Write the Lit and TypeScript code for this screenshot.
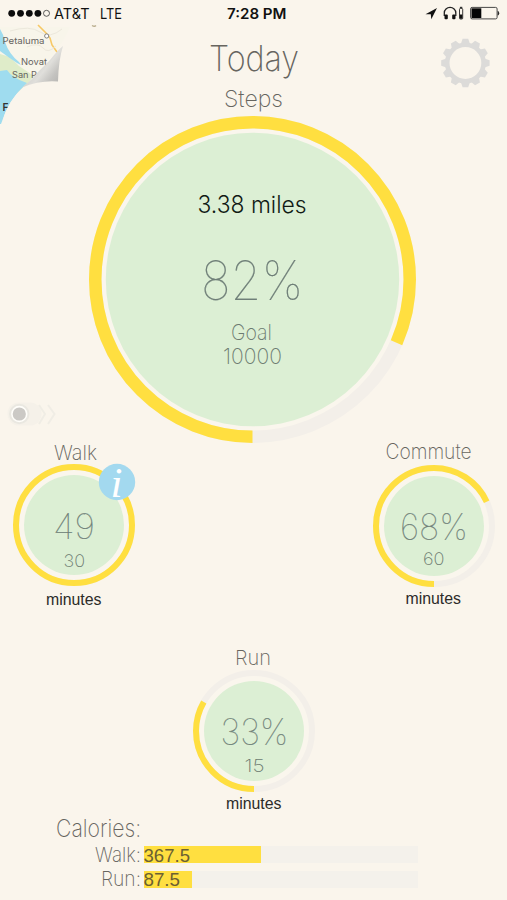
import { LitElement, html, svg, css } from "lit";
import { customElement, property } from "lit/decorators.js";

/** One run of text: its left edge, baseline, size and drawn width. */
type Run = { t: string; x: number; y: number; s: number; w: number; c: string };

const run = (r: Run) => svg`<text class=${r.c} x=${r.x} y=${r.y} font-size=${r.s}
  textLength=${r.w} lengthAdjust="spacingAndGlyphs">${r.t}</text>`;

const textStyles = css`
  svg { display: block; overflow: visible; }
  text { font-family: Inter, "Liberation Sans", sans-serif; white-space: pre; }
  .thin { font-weight: 100; fill: #6f7f78; stroke: #6f7f78; stroke-width: 0.2; }
  .light { font-weight: 200; fill: #67655f; }
  .goal { font-weight: 200; fill: #6c7b71; }
  .body { font-weight: 300; fill: #111b14; }
  .unit { font-family: "Liberation Sans", sans-serif; fill: #2c2b29; }
`;

@customElement("goal-dial")
export class GoalDial extends LitElement {
  @property({ type: Number }) size = 122;
  @property({ type: Number }) band = 6;
  @property({ type: Number }) disc = 50;
  @property({ type: Number }) progress = 0;
  @property({ attribute: false }) runs: Run[] = [];

  static styles = [
    textStyles,
    css`
      :host { display: block; }
      .track { fill: #faf6ed; stroke: #f3efe9; }
      .value { fill: none; stroke: #ffdf40; }
      .disc { fill: #dcefd4; }
    `,
  ];

  render() {
    const c = this.size / 2;
    const r = c - this.band / 2;
    const len = 2 * Math.PI * r;
    return html`<svg width=${this.size} height=${this.size} viewBox="0 0 ${this.size} ${this.size}">
      <circle class="track" cx=${c} cy=${c} r=${r} stroke-width=${this.band}></circle>
      <circle class="value" cx=${c} cy=${c} r=${r} stroke-width=${this.band}
        stroke-dasharray="${len * this.progress} ${len}" transform="rotate(90 ${c} ${c})"></circle>
      <circle class="disc" cx=${c} cy=${c} r=${this.disc}></circle>
      ${this.runs.map(run)}
    </svg>`;
  }
}

const toothAngles = Array.from({ length: 12 }, (_, i) => i * 30);

@customElement("app-root")
export class AppRoot extends LitElement {
  static styles = [
    textStyles,
    css`
      :host {
        display: flex; flex-direction: column; position: relative;
        width: 507px; height: 900px; overflow: hidden; background: #faf5ec;
      }
      .status { display: grid; grid-template-columns: 220px 200px 87px; height: 27px; flex: none; }
      .status text { fill: #111; }
      .status .clock { font-weight: 600; }
      .head { display: grid; grid-template-columns: 200px 227px 80px; height: 89px; flex: none; }
      .title { grid-column: 2; }
      .main { display: flex; justify-content: center; padding-right: 2px; height: 327px; flex: none; }
      .pair { display: flex; justify-content: space-between; height: 180px; padding: 0 12px 0 13px; flex: none; }
      .metric { display: flex; flex-direction: column; width: 122px; }
      .single { display: flex; justify-content: center; padding-left: 1px; height: 180px; margin-top: 24px; flex: none; }
      .calories { display: flex; flex-direction: column; padding-left: 50px; }
      .row { display: grid; grid-template-columns: 94px 274px; height: 17px; margin-bottom: 8px; }
      .bar { background: #f4f1eb; }
      .fill { height: 17px; background: #ffdf40; }
      .num { font-family: "Liberation Sans", sans-serif; fill: #6b6032; }
      .map { position: absolute; left: 0; top: 24px; }
      .map text { fill: #66645f; font-weight: 400; }
      .map .bold { fill: #333; font-weight: 600; }
      .toggle { position: absolute; left: 4px; top: 398px; }
      .info { position: absolute; left: 98px; top: 463px; }
      .info text { font-family: "Liberation Serif", serif; font-style: italic; fill: #fff; }
    `,
  ];

  private metric(name: Run, top: number, progress: number, runs: Run[], unit: Run) {
    return html`<div class="metric">
      <svg width="122" height=${top}>${run(name)}</svg>
      <goal-dial .progress=${progress} .runs=${runs}></goal-dial>
      <svg width="122" height="30">${run(unit)}</svg>
    </div>`;
  }

  private bar(name: Run, width: number, value: Run) {
    return html`<div class="row">
      <svg width="94" height="17">${run(name)}</svg>
      <div class="bar">
        <div class="fill" style="width:${width}px"><svg width="60" height="17">${run(value)}</svg></div>
      </div>
    </div>`;
  }

  render() {
    return html`
      <svg class="map" width="110" height="104" viewBox="0 24 110 104">
        <defs>
          <linearGradient id="curl" gradientUnits="userSpaceOnUse" x1="38" y1="66" x2="58" y2="82">
            <stop offset="0" stop-color="#d6d5d2"></stop><stop offset="0.3" stop-color="#e0dfdb"></stop>
            <stop offset="0.7" stop-color="#c4c3c0"></stop><stop offset="1" stop-color="#b9b8b5"></stop>
          </linearGradient>
        </defs>
        <path d="M0 27H70Q63 42 55 52L27 83Q8 100 1 124H0Z" fill="#f8f5ea"></path>
        <path d="M0 54L10 57L19 66L34 76L20 92L0 100Z" fill="#dfecc9"></path>
        <path d="M0 29Q4 35 5 42Q9 54 19 62L21 65L17 63Q8 57 0 51Z" fill="#9fdcef"></path>
        <path d="M0 71L7 70Q12 78 27 83Q8 100 1 124H0Z" fill="#9fdcef"></path>
        <path d="M38 25L46 33L50 38L52 45L57 52" fill="none" stroke="#f7c865" stroke-width="1.6"></path>
        <path d="M10 31Q30 25 40 32T62 29M27 47Q38 42 43 48T56 46" fill="none" stroke="#ece8dc"></path>
        <circle cx="46.7" cy="36" r="2.1" fill="#fff" stroke="#777" stroke-width="0.9"></circle>
        ${[
          { t: "Petaluma", x: 2.5, y: 44, s: 8.8, w: 42, c: "" },
          { t: "Novat", x: 21, y: 65, s: 8.8, w: 26, c: "" },
          { t: "San P", x: 12, y: 78, s: 8.8, w: 25, c: "" },
          { t: "F", x: 2.5, y: 111, s: 11, w: 6, c: "bold" },
        ].map(run)}
        <path d="M63 46L58 81L27 84Q7 100 2 124H110V46Z" fill="#faf5ec"></path>
        <path d="M63 46Q57 51 50 60L38 72Q33 79 22 87.500Q40 80 58 81.500Q58.500 60 63 46Z" fill="url(#curl)"></path>
        <path d="M92 25.5q2.5 1.5 4 0" fill="none" stroke="#b9ad8d" stroke-width="1.3"></path>
      </svg>

      <div class="status">
        <svg width="130" height="27">
          ${[11.7, 20.5, 29.3, 37.9].map((x) => svg`<circle cx=${x} cy="13.3" r="3.4" fill="#0c0c0c"></circle>`)}
          <circle cx="46.5" cy="13.3" r="3" fill="none" stroke="#333" stroke-width="0.8"></circle>
          ${run({ t: "AT&T", x: 54, y: 18.5, s: 14, w: 35.5, c: "" })}
          ${run({ t: "LTE", x: 100, y: 18.5, s: 14, w: 22, c: "" })}
        </svg>
        <svg width="80" height="27" viewBox="220 0 80 27">
          ${run({ t: "7:28 PM", x: 227, y: 18.7, s: 14, w: 59.5, c: "clock" })}
        </svg>
        <svg width="87" height="27" viewBox="420 0 87 27">
          <path d="M437 8L425.5 14.3H430.8L431.3 19.3Z" fill="#111"></path>
          <path d="M444.3 16V13A5.5 5.3 0 0 1 455.8 13V16" fill="none" stroke="#222" stroke-width="1.3"></path>
          <rect x="444.5" y="14.5" width="3.3" height="4.8" rx="1" fill="#111"></rect>
          <rect x="452.2" y="14.5" width="3.3" height="4.8" rx="1" fill="#111"></rect>
          <rect x="459.5" y="8.5" width="3.2" height="10.5" rx="0.8" fill="none" stroke="#222" stroke-width="0.9"></rect>
          <rect x="460" y="14.5" width="2.3" height="4.2" fill="#111"></rect>
          <rect x="459.9" y="6.8" width="2.4" height="1.3" fill="#333"></rect>
          <rect x="470.6" y="7.4" width="26.5" height="11.5" rx="1.5" fill="none" stroke="#333" stroke-width="0.9"></rect>
          <rect x="471.5" y="8.3" width="9.8" height="9.7" fill="#050505"></rect>
          <path d="M498 11.3Q500 13.2 498 15.2Z" fill="#222" stroke="#222" stroke-width="0.6"></path>
        </svg>
      </div>

      <div class="head">
        <svg class="title" width="100" height="88" viewBox="200 27 100 88">
          ${run({ t: "Today", x: 209, y: 71, s: 35.5, w: 90, c: "light" })}
          ${run({ t: "Steps", x: 224, y: 106.7, s: 23.5, w: 59, c: "light" })}
        </svg>
        <svg width="80" height="88" viewBox="427 27 80 88">
          <g transform="translate(465.4 63)" fill="#dcdbd9">
            <circle r="18.2" fill="none" stroke="#dcdbd9" stroke-width="4.6"></circle>
            ${toothAngles.map((a) => svg`<path d="M-4.6 -19L-2.8 -24.2H2.8L4.6 -19Z" transform="rotate(${a})"></path>`)}
          </g>
        </svg>
      </div>

      <div class="main">
        <goal-dial .size=${327} .band=${12.5} .disc=${146.7} .progress=${0.8155} .runs=${[
          { t: "3.38 miles", x: 108.5, y: 97.3, s: 23.5, w: 109, c: "body" },
          { t: "82%", x: 112, y: 183.6, s: 54, w: 102.5, c: "thin" },
          { t: "Goal", x: 142, y: 224, s: 21, w: 41, c: "goal" },
          { t: "10000", x: 134, y: 248, s: 22, w: 59, c: "goal" },
        ]}></goal-dial>
      </div>

      <div class="pair">
        ${this.metric(
          { t: "Walk", x: 41, y: 16.5, s: 20.5, w: 43, c: "light" }, 21, 1,
          [
            { t: "49", x: 40, y: 75, s: 35, w: 42, c: "thin" },
            { t: "30", x: 50.5, y: 103.3, s: 17, w: 21.5, c: "goal" },
          ],
          { t: "minutes", x: 33, y: 18.7, s: 16, w: 55.5, c: "unit" },
        )}
        ${this.metric(
          { t: "Commute", x: 12.5, y: 15.5, s: 21, w: 86, c: "light" }, 22, 0.68,
          [
            { t: "68%", x: 27, y: 75, s: 36, w: 68, c: "thin" },
            { t: "60", x: 50, y: 99.7, s: 17, w: 21.5, c: "goal" },
          ],
          { t: "minutes", x: 32.5, y: 16.7, s: 16, w: 55.5, c: "unit" },
        )}
      </div>

      <div class="single">
        ${this.metric(
          { t: "Run", x: 42, y: 17.5, s: 20.5, w: 36, c: "light" }, 23, 0.333,
          [
            { t: "33%", x: 27.5, y: 74.5, s: 36, w: 68, c: "thin" },
            { t: "15", x: 51.5, y: 101.5, s: 17, w: 20, c: "goal" },
          ],
          { t: "minutes", x: 33, y: 16.7, s: 16, w: 55.5, c: "unit" },
        )}
      </div>

      <div class="calories">
        <svg width="94" height="19">${run({ t: "Calories:", x: 6, y: 9.5, s: 24, w: 85, c: "light" })}</svg>
        ${this.bar(
          { t: "Walk:", x: 45, y: 15.7, s: 20.5, w: 46, c: "light" }, 117,
          { t: "367.5", x: -0.5, y: 15.7, s: 18.5, w: 46.5, c: "num" },
        )}
        ${this.bar(
          { t: "Run:", x: 51, y: 15, s: 20.5, w: 40, c: "light" }, 47.5,
          { t: "87.5", x: -0.5, y: 15.3, s: 18.5, w: 36.5, c: "num" },
        )}
      </div>

      <svg class="toggle" width="56" height="32" viewBox="4 398 56 32">
        <rect x="7.5" y="402.5" width="34" height="23" rx="11.5" fill="#f5f1e9"></rect>
        <circle cx="19.3" cy="414" r="9.2" fill="#fffefa" stroke="#eae8e1" stroke-width="2"></circle>
        <circle cx="19.3" cy="414" r="6.6" fill="#cbc9c5"></circle>
        <path d="M39 405L45 414L39 424M48 405L54.5 414L48 424" fill="none" stroke="#f0ede5" stroke-width="2"></path>
      </svg>

      <svg class="info" width="38" height="38">
        <circle cx="19" cy="19" r="18.2" fill="#a3d9ef"></circle>
        ${run({ t: "i", x: 12.5, y: 33.5, s: 43, w: 12, c: "" })}
      </svg>
    `;
  }
}
